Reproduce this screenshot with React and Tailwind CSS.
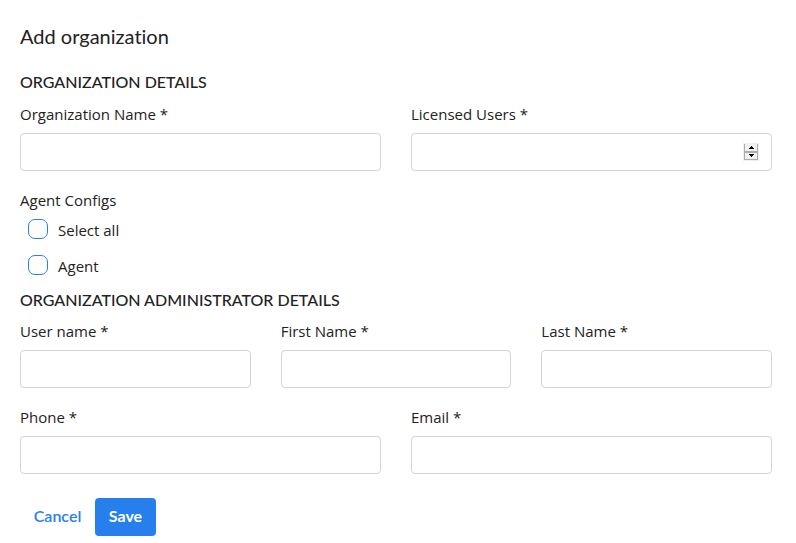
import React from "react";

function Field({ id, label, type = "text", stepper = false }) {
  return (
    <div className="flex min-w-0 flex-col gap-[7px]">
      <label htmlFor={id} className="text-[15px] leading-6">
        {label} *
      </label>
      <div className="flex h-[38px] items-center rounded border border-[#ced4da] bg-white pr-3 focus-within:border-[#277fee]">
        <input
          id={id}
          type={type}
          required
          className="h-full min-w-0 flex-1 appearance-none bg-transparent px-3 text-[15px] outline-none [&::-webkit-inner-spin-button]:appearance-none"
        />
        {stepper && <Stepper inputId={id} />}
      </div>
    </div>
  );
}

function Stepper({ inputId }) {
  return (
    <div className="flex h-[18px] w-4 flex-col border border-[#efefef] bg-[#adadad]">
      <button
        type="button"
        aria-label="Increase"
        onClick={() => document.getElementById(inputId).stepUp()}
        className="flex flex-1 items-center justify-center border-x border-b border-[#adadad] bg-[#f0f0f0]"
      >
        <svg width="5" height="3" viewBox="0 0 5 3" shapeRendering="crispEdges" aria-hidden="true">
          <path d="M2 0h1v1h1v1h1v1H0V2h1V1h1z" fill="#000" />
        </svg>
      </button>
      <button
        type="button"
        aria-label="Decrease"
        onClick={() => document.getElementById(inputId).stepDown()}
        className="flex flex-1 items-center justify-center border border-[#adadad] bg-[#f0f0f0]"
      >
        <svg width="5" height="3" viewBox="0 0 5 3" shapeRendering="crispEdges" aria-hidden="true">
          <path d="M0 0h5v1H4v1H3v1H2V2H1V1H0z" fill="#000" />
        </svg>
      </button>
    </div>
  );
}

function Check({ id, label }) {
  return (
    <div className="flex h-9 items-center gap-[10px] pl-2">
      <input
        id={id}
        type="checkbox"
        className="size-5 appearance-none rounded-[7px] border border-[#277fee] bg-white checked:bg-[#277fee]"
      />
      <label htmlFor={id} className="pt-[2px] text-[15px] leading-6">
        {label}
      </label>
    </div>
  );
}

function SectionTitle({ children }) {
  return (
    <h2 className="font-['Lato',sans-serif] text-base leading-6 font-medium uppercase">
      {children}
    </h2>
  );
}

export default function App() {
  return (
    <main className="min-h-screen bg-white pt-6 pr-6 pb-[7px] pl-5 font-['Open_Sans','Noto_Sans',sans-serif] text-[#222222]">
      <h1 className="font-['Lato',sans-serif] text-xl leading-6 [font-variant-ligatures:none]">
        Add organization
      </h1>
      <form className="mt-[22px]" onSubmit={(e) => e.preventDefault()}>
        <SectionTitle>Organization details</SectionTitle>
        <div className="mt-2 grid grid-cols-2 gap-x-[30px]">
          <Field id="org-name" label="Organization Name" />
          <Field id="licensed-users" label="Licensed Users" type="number" stepper />
        </div>
        <fieldset className="mt-[17px]">
          <legend className="text-[15px] leading-6">Agent Configs</legend>
          <div className="-mt-px">
            <Check id="select-all" label="Select all" />
            <Check id="agent" label="Agent" />
          </div>
        </fieldset>
        <div className="mt-[5px]">
          <SectionTitle>Organization administrator details</SectionTitle>
        </div>
        <div className="mt-[7px] grid grid-cols-3 gap-x-[30px]">
          <Field id="user-name" label="User name" />
          <Field id="first-name" label="First Name" />
          <Field id="last-name" label="Last Name" />
        </div>
        <div className="mt-[17px] grid grid-cols-2 gap-x-[30px]">
          <Field id="phone" label="Phone" type="tel" />
          <Field id="email" label="Email" type="email" />
        </div>
        <div className="mt-6 flex font-['Lato',sans-serif] text-base leading-6">
          <button type="button" className="h-[38px] min-w-[75px] rounded px-3 pb-0.5 font-semibold text-[#277fee]">
            Cancel
          </button>
          <button type="submit" className="h-[38px] min-w-[61px] rounded bg-[#277fee] px-3 pb-0.5 font-bold text-white">
            Save
          </button>
        </div>
      </form>
    </main>
  );
}
